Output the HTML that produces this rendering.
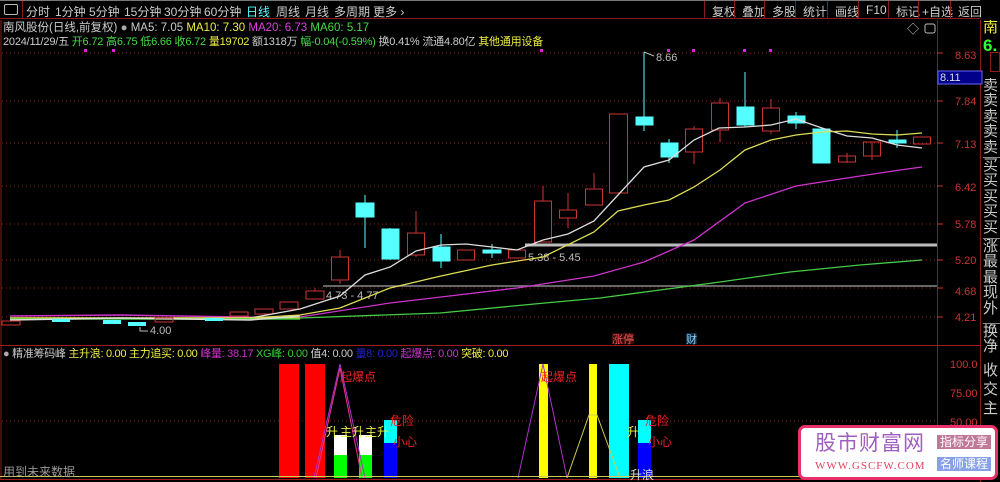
<!DOCTYPE html>
<html><head><meta charset="utf-8"><style>
*{margin:0;padding:0;box-sizing:border-box}
body{width:1000px;height:482px;background:#000;overflow:hidden;position:relative;font-family:"Liberation Sans","Noto Sans CJK SC",sans-serif;font-size:12px;color:#ccc}
.t{position:absolute;white-space:nowrap;line-height:14px}
.tb{position:absolute;top:0;height:19px;border-bottom:1px solid #8b1a1a;left:0;width:980px;border-top:1px solid #777}
.tb span{position:absolute;top:2px;font-size:12px;color:#ccc}
.btn{position:absolute;top:1px;height:18px;border-left:1px solid #8b1a1a;color:#ccc;font-size:12px;padding:2px 0 0 7px}
.rc{position:absolute;left:983px;color:#ccc;font-size:15px;line-height:15.4px;width:17px;overflow:hidden}
</style></head><body>
<div class="tb">
<span style="left:4px;top:3px;width:14px;height:11px;border:1px solid #bbb;border-radius:2px"></span>
<span style="left:22px;top:0;width:1px;height:18px;background:#8b1a1a"></span>
<span style="left:26px">分时</span><span style="left:55px">1分钟</span><span style="left:89px">5分钟</span><span style="left:124px">15分钟</span><span style="left:164px">30分钟</span><span style="left:204px">60分钟</span><span style="left:246px;color:#5ff">日线</span><span style="left:276px">周线</span><span style="left:305px">月线</span><span style="left:334px">多周期</span><span style="left:373px">更多 ›</span>
</div>
<div class="btn" style="left:704px">复权</div><div class="btn" style="left:734px">叠加</div><div class="btn" style="left:764px">多股</div><div class="btn" style="left:795px">统计</div><div class="btn" style="left:827px">画线</div><div class="btn" style="left:858px">F10</div><div class="btn" style="left:888px">标记</div><div class="btn" style="left:918px;padding-left:3px">+自选</div><div class="btn" style="left:950px">返回</div>
<div class="t" style="left:3px;top:21px;font-size:11.5px">南风股份(日线,前复权) <span style="color:#aaa">●</span> MA5: 7.05 <span style="color:#ee4">MA10: 7.30</span> <span style="color:#d4d">MA20: 6.73</span> <span style="color:#4d4">MA60: 5.17</span></div>
<div class="t" style="left:3px;top:35px;font-size:11px;letter-spacing:-0.2px">2024/11/29/五 <span style="color:#4d4">开6.72 高6.75 低6.66 收6.72 </span><span style="color:#ee4">量19702</span> 额1318万 <span style="color:#4d4">幅-0.04(-0.59%)</span> 换0.41% 流通4.80亿 <span style="color:#ee4">其他通用设备</span></div>
<div class="rc" style="top:20px;color:#ee4">南</div>
<div class="rc" style="top:38px;color:#3f3;font-weight:bold;font-size:17px">6.</div>
<div style="position:absolute;left:990px;top:52px;width:10px;height:20px;border:1px solid #8b1a1a"></div>
<div class="rc" style="top:78px">卖<br>卖<br>卖<br>卖<br>卖</div>
<div class="rc" style="top:157px;border-top:1px solid #888">买<br>买<br>买<br>买<br>买</div>
<div class="rc" style="top:238px;border-top:1px solid #888">涨<br>最<br>最<br>现<br>外</div>
<div class="rc" style="top:323px;border-top:1px solid #888">换<br>净</div>
<div class="rc" style="top:361px;line-height:19px">收<br>交<br>主</div>
<svg style="position:absolute;left:0;top:0" width="1000" height="482">
<g stroke="#8b1a1a" stroke-dasharray="1,3">
<line x1="2" y1="53" x2="937" y2="53"/><line x1="2" y1="101" x2="937" y2="101"/><line x1="2" y1="143" x2="937" y2="143"/><line x1="2" y1="186" x2="937" y2="186"/><line x1="2" y1="224" x2="937" y2="224"/><line x1="2" y1="260" x2="937" y2="260"/><line x1="2" y1="288" x2="937" y2="288"/><line x1="2" y1="317" x2="937" y2="317"/><line x1="2" y1="421" x2="937" y2="421"/>
</g>
<line x1="1" y1="20" x2="1" y2="480" stroke="#8b1a1a"/>
<line x1="937.5" y1="20" x2="937.5" y2="480" stroke="#8b1a1a"/>
<line x1="980.5" y1="20" x2="980.5" y2="482" stroke="#8b1a1a"/>
<line x1="0" y1="345.5" x2="980" y2="345.5" stroke="#a01c1c"/>
<line x1="0" y1="479.5" x2="980" y2="479.5" stroke="#a01c1c"/>
<g fill="#c33" font-size="11" font-family="Liberation Sans">
<text x="955" y="59">8.63</text><text x="955" y="105">7.84</text><text x="955" y="148">7.13</text><text x="955" y="191">6.42</text><text x="955" y="228">5.78</text><text x="955" y="264">5.20</text><text x="955" y="295">4.68</text><text x="955" y="321">4.21</text>
<text x="950" y="368">100.0</text><text x="950" y="397">75.00</text><text x="950" y="426">50.00</text>
</g>
<g stroke="#c33"><line x1="937" y1="53" x2="943" y2="53"/><line x1="937" y1="101" x2="943" y2="101"/><line x1="937" y1="143" x2="943" y2="143"/><line x1="937" y1="186" x2="943" y2="186"/><line x1="937" y1="224" x2="943" y2="224"/><line x1="937" y1="260" x2="943" y2="260"/><line x1="937" y1="288" x2="943" y2="288"/><line x1="937" y1="317" x2="943" y2="317"/></g>
<rect x="938" y="71" width="44" height="13" fill="#00008b" stroke="#66f"/>
<text x="940" y="81" fill="#ddd" font-size="11">8.11</text>
<text x="907" y="33" fill="#ccc" font-size="12">◇</text><rect x="925" y="24" width="10" height="9" fill="none" stroke="#bbb" rx="2"/>
<line x1="525" y1="245" x2="937" y2="245" stroke="#bbb" stroke-width="3"/>
<line x1="323" y1="286" x2="937" y2="286" stroke="#888" stroke-width="1.5"/>
<g fill="#bbb" font-size="11"><text x="528" y="261">5.38 - 5.45</text><text x="326" y="299">4.73 - 4.77</text><text x="150" y="334">4.00</text><text x="656" y="61">8.66</text></g>
<path d="M140 327 L140 331 L148 331" stroke="#bbb" fill="none"/><path d="M644 52 L654 56" stroke="#bbb"/>
<g fill="#d2d"><rect x="84" y="49" width="3" height="3"/><rect x="112" y="49" width="3" height="3"/><rect x="540" y="49" width="3" height="3"/><rect x="667" y="49" width="3" height="3"/><rect x="692" y="49" width="3" height="3"/><rect x="743" y="49" width="3" height="3"/><rect x="769" y="49" width="3" height="3"/></g>
<g stroke-width="1.5" fill="none">
<path d="M10 316 L120 315 L300 318" stroke="#c3c"/>
<path d="M10 318 L200 318 L300 318" stroke="#ee4"/>
<path d="M10 319 L300 319" stroke="#4c4"/>
<path d="M10 320 L120 318 L250 320 L300 316" stroke="#ddd"/>
</g>
<g fill="none" stroke="#c33"><rect x="2" y="321" width="18" height="4"/><rect x="155" y="318" width="18" height="4"/><rect x="230" y="312" width="18" height="4"/><rect x="255" y="309" width="18" height="5"/><rect x="280" y="302" width="18" height="7"/></g>
<g fill="#5ff"><rect x="52" y="319" width="18" height="3"/><rect x="103" y="320" width="18" height="4"/><rect x="128" y="322" width="18" height="4"/><rect x="205" y="318" width="18" height="3"/></g>
<g stroke="#c33" fill="none">
<line x1="315" y1="288" x2="315" y2="291"/><rect x="306" y="291" width="18" height="8"/>
<line x1="340" y1="250" x2="340" y2="284"/><rect x="331.5" y="257" width="17" height="23" fill="#000"/>
<line x1="416" y1="211" x2="416" y2="257"/><rect x="407.5" y="233" width="17" height="22" fill="#000"/>
<rect x="457.5" y="250" width="17" height="10"/>
<rect x="508.5" y="250" width="17" height="8"/>
<line x1="543" y1="186" x2="543" y2="242"/><rect x="534.5" y="201" width="17" height="41" fill="#000"/>
<line x1="568" y1="193" x2="568" y2="228"/><rect x="559.5" y="210" width="17" height="8" fill="#000"/>
<line x1="594" y1="173" x2="594" y2="189"/><rect x="585.5" y="189" width="17" height="16" fill="#000"/>
<rect x="609.5" y="114" width="18" height="79" fill="#000"/>
<line x1="694" y1="126" x2="694" y2="164"/><rect x="685.5" y="129" width="17" height="23" fill="#000"/>
<line x1="720" y1="98" x2="720" y2="142"/><rect x="711.5" y="103" width="17" height="27" fill="#000"/>
<line x1="771" y1="99" x2="771" y2="134"/><rect x="762.5" y="108" width="17" height="23" fill="#000"/>
<line x1="847" y1="153" x2="847" y2="163"/><rect x="838.5" y="156" width="17" height="6"/>
<line x1="872" y1="142" x2="872" y2="160"/><rect x="863.5" y="142" width="17" height="14"/>
<rect x="913.5" y="137" width="17" height="7"/>
</g>
<g stroke="#5ff" fill="#5ff">
<line x1="365" y1="195" x2="365" y2="248"/><rect x="356" y="203" width="18" height="14"/>
<line x1="390" y1="228" x2="390" y2="260"/><rect x="382" y="229" width="17" height="30"/>
<line x1="441" y1="234" x2="441" y2="268"/><rect x="433" y="247" width="17" height="14"/>
<line x1="492" y1="244" x2="492" y2="258"/><rect x="483" y="250" width="18" height="3"/>
<line x1="644" y1="52" x2="644" y2="131"/><rect x="636" y="117" width="17" height="8"/>
<line x1="669" y1="139" x2="669" y2="163"/><rect x="661" y="143" width="17" height="14"/>
<line x1="745" y1="72" x2="745" y2="127"/><rect x="737" y="107" width="17" height="18"/>
<line x1="796" y1="112" x2="796" y2="129"/><rect x="788" y="116" width="17" height="7"/>
<rect x="813" y="129" width="17" height="34"/>
<line x1="897" y1="130" x2="897" y2="148"/><rect x="889" y="140" width="17" height="3"/>
</g>
<g fill="none" stroke-width="1.3">
<path d="M250 318 L300 309 L340 296 L365 275 L390 267 L416 251 L441 245 L466 244 L492 247 L517 250 L543 240 L568 234 L594 221 L618 195 L644 167 L669 160 L694 140 L719 128 L745 127 L771 125 L796 119 L822 128 L847 136 L872 138 L897 145 L922 148" stroke="#ddd"/>
<path d="M250 318 L300 315 L340 308 L390 288 L441 276 L492 265 L543 257 L594 232 L618 211 L644 205 L669 200 L694 187 L720 170 L745 150 L771 140 L796 135 L822 132 L847 131 L872 134 L897 135 L922 133" stroke="#dd5"/>
<path d="M300 317 L390 303 L441 297 L517 288 L594 276 L644 262 L694 240 L745 203 L796 186 L847 178 L900 170 L922 167" stroke="#c3c"/>
<path d="M300 318 L440 313 L545 303 L600 298 L660 290 L720 282 L790 272 L860 265 L922 260" stroke="#4c4"/>
</g>
<rect x="612" y="333" width="22" height="11" fill="#3a0a0a"/><text x="612" y="343" fill="#e55" font-size="11">涨停</text>
<rect x="686" y="333" width="11" height="11" fill="#0a2a3a"/><text x="686" y="343" fill="#8cf" font-size="11">财</text>
<g>
<rect x="279" y="364" width="20" height="114" fill="#f00"/><rect x="305" y="364" width="20" height="114" fill="#f00"/>
<rect x="334" y="435" width="13" height="20" fill="#fff"/><rect x="334" y="455" width="13" height="23" fill="#0f0"/>
<rect x="359" y="435" width="13" height="20" fill="#fff"/><rect x="359" y="455" width="13" height="23" fill="#0f0"/>
<rect x="384" y="420" width="13" height="23" fill="#0ff"/><rect x="384" y="443" width="13" height="35" fill="#00f"/>
<rect x="539" y="364" width="9" height="114" fill="#ff0"/><rect x="589" y="364" width="8" height="114" fill="#ff0"/>
<rect x="609" y="364" width="20" height="114" fill="#0ff"/>
<rect x="638" y="420" width="13" height="23" fill="#0ff"/><rect x="638" y="443" width="13" height="35" fill="#00f"/>
<path d="M314 478 L340 364 L365 478" stroke="#a3c" fill="none"/><path d="M316 478 L340 368 L362 478" stroke="#e38" fill="none"/>
<path d="M518 478 L543 364 L567 478" stroke="#a3c" fill="none"/>
<path d="M567 478 L589 415 L597 415 L620 478" stroke="#cc5" fill="none"/>
<line x1="0" y1="476.5" x2="937" y2="476.5" stroke="#cc5"/>
<g fill="#e22" font-size="12"><text x="340" y="381">起爆点</text><text x="541" y="381">起爆点</text><text x="390" y="425">危险</text><text x="393" y="446">小心</text><text x="645" y="425">危险</text><text x="648" y="446">小心</text></g>
<g fill="#ee4" font-size="12"><text x="326" y="436">升</text><text x="340" y="436">主升</text><text x="365" y="436">主升</text><text x="627" y="436">升</text><text x="630" y="479" fill="#ddd">升浪</text></g>
<text x="3" y="476" fill="#999" font-size="12">用到未来数据</text>
</g>
</svg>
<div class="t" style="left:3px;top:347px;font-size:11px;letter-spacing:-0.3px"><span style="color:#aaa">●</span> 精准筹码峰 <span style="color:#ee4">主升浪: 0.00 主力追买: 0.00</span> <span style="color:#c3c">峰量: 38.17</span> <span style="color:#3c3">XG峰: 0.00</span> 值4: 0.00 <span style="color:#22c">量8: 0.00</span> <span style="color:#c3c">起爆点: 0.00</span> <span style="color:#ee4">突破: 0.00</span></div>
<div style="position:absolute;left:798px;top:425px;width:200px;height:55px;background:#fff;border:3px solid #e8306a;border-radius:7px">
<div class="t" style="left:14px;top:4px;font-size:21px;line-height:24px;color:#a05fc0;letter-spacing:1px">股市财富网</div>
<div class="t" style="left:14px;top:31px;font-size:11px;color:#e04060;font-family:'Liberation Serif',serif;letter-spacing:1px">WWW.GSCFW.COM</div>
<div class="t" style="left:136px;top:7px;background:#c07898;color:#fff;font-size:12px;padding:0 3px">指标分享</div>
<div class="t" style="left:136px;top:29px;background:#88a0e8;color:#fff;font-size:12px;padding:0 3px">名师课程</div>
</div>
</body></html>
